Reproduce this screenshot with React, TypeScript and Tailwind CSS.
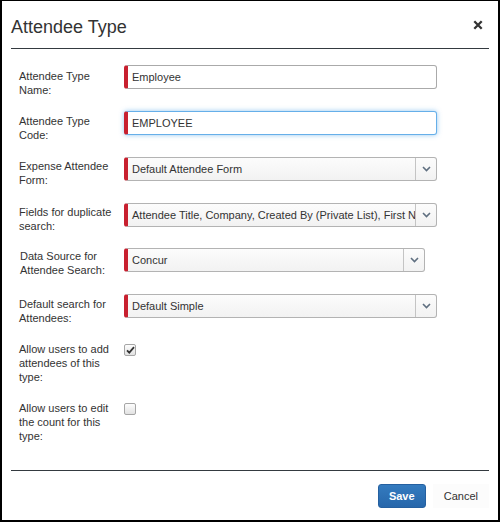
import React from 'react';

const CloseIcon = () => (
  <svg width="10" height="10" viewBox="0 0 10 10">
    <path d="M1.3 1.3l7.4 7.4M8.7 1.3l-7.4 7.4" stroke="#333" strokeWidth="2.3" />
  </svg>
);

const Chevron = () => (
  <svg width="9" height="6" viewBox="0 0 9 6">
    <path d="M1 1l3.5 3.5L8 1" fill="none" stroke="#5f6f80" strokeWidth="1.6" />
  </svg>
);

const TextField = ({ value, focused }: { value: string; focused?: boolean }) => (
  <div
    className={`w-[313px] h-[24px] rounded-[3px] border border-l-4 border-l-[#c8202f] bg-white pl-[4px] flex items-center leading-[14px] ${
      focused ? 'border-[#66afe9] shadow-[0_0_5px_rgba(102,175,233,0.7)]' : 'border-[#aaaaaa]'
    }`}
  >
    {value}
  </div>
);

const SelectField = ({ value, narrow }: { value: string; narrow?: boolean }) => (
  <div
    className={`${narrow ? 'w-[301px]' : 'w-[313px]'} h-[24px] rounded-[3px] border border-[#b3b3b3] border-l-4 border-l-[#c8202f] bg-linear-to-b from-[#fcfcfc] to-[#f2f2f2] flex`}
  >
    <div className="flex-1 min-w-0 pl-[4px] flex items-center overflow-hidden whitespace-nowrap leading-[14px]">{value}</div>
    <div className="w-[21px] shrink-0 border-l border-[#c4c4c4] flex items-center justify-center">
      <Chevron />
    </div>
  </div>
);

const Checkbox = ({ checked }: { checked?: boolean }) => (
  <div className="mt-[2px] w-[12px] h-[12px] rounded-[2px] border border-[#a6a6a6] bg-linear-to-b from-[#fdfdfd] to-[#e2e2e2] flex items-center justify-center">
    {checked && (
      <svg width="9" height="8" viewBox="0 0 9 8">
        <path d="M1 4.3l2.3 2.3L8 1.2" fill="none" stroke="#333" strokeWidth="1.8" />
      </svg>
    )}
  </div>
);

const rows = [
  { label: 'Attendee Type Name:', h: 'h-[46px]', lbl: 'mt-[4px]', field: <TextField value="Employee" /> },
  { label: 'Attendee Type Code:', h: 'h-[46px]', lbl: 'mt-[3px]', field: <TextField value="EMPLOYEE" focused /> },
  { label: 'Expense Attendee Form:', h: 'h-[46px]', lbl: 'mt-[2px]', field: <SelectField value="Default Attendee Form" /> },
  {
    label: 'Fields for duplicate search:',
    h: 'h-[45px]',
    lbl: 'mt-[2px]',
    field: <SelectField value="Attendee Title, Company, Created By (Private List), First Name, Last Name" />,
  },
  { label: 'Data Source for Attendee Search:', h: 'h-[46px]', lbl: 'mt-[1px] pl-[1px]', field: <SelectField value="Concur" narrow /> },
  { label: 'Default search for Attendees:', h: 'h-[48px]', lbl: 'mt-[3px]', field: <SelectField value="Default Simple" /> },
  { label: 'Allow users to add attendees of this type:', h: 'h-[59px]', lbl: '', field: <Checkbox checked /> },
  { label: 'Allow users to edit the count for this type:', h: 'h-[59px]', lbl: '', field: <Checkbox /> },
];

export default function App() {
  return (
    <div className="w-[500px] h-[522px] bg-white border-black border-t border-x-2 border-b-2 flex flex-col font-['Liberation_Sans',Arial,sans-serif] text-[11px] text-[#333]">
      {/* Header */}
      <div className="mx-[9px] h-[48px] shrink-0 border-b border-[#343a40] flex justify-between items-start pt-[15px]">
        <h1 className="text-[18px] leading-[22px] font-normal text-[#333]">Attendee Type</h1>
        <button className="mt-[4px] mr-[6px]">
          <CloseIcon />
        </button>
      </div>

      {/* Form */}
      <div className="flex-1 pt-[16px] pl-[17px]">
        {rows.map((r, i) => (
          <div key={i} className={`flex items-start ${r.h}`}>
            <div className={`w-[105px] pr-[9px] leading-[14px] ${r.lbl}`}>{r.label}</div>
            {r.field}
          </div>
        ))}
      </div>

      {/* Footer */}
      <div className="mx-[9px] h-[50px] shrink-0 border-t border-[#343a40] flex justify-end items-start pt-[13px]">
        <button className="h-[24px] w-[48px] rounded-[3px] border border-[#2560a0] bg-linear-to-b from-[#347bbf] to-[#2767ab] text-white font-bold leading-[14px]">
          Save
        </button>
        <button className="ml-[7px] h-[24px] px-[11px] bg-[#fcfcfc] text-[#333] leading-[14px]">Cancel</button>
      </div>
    </div>
  );
}
